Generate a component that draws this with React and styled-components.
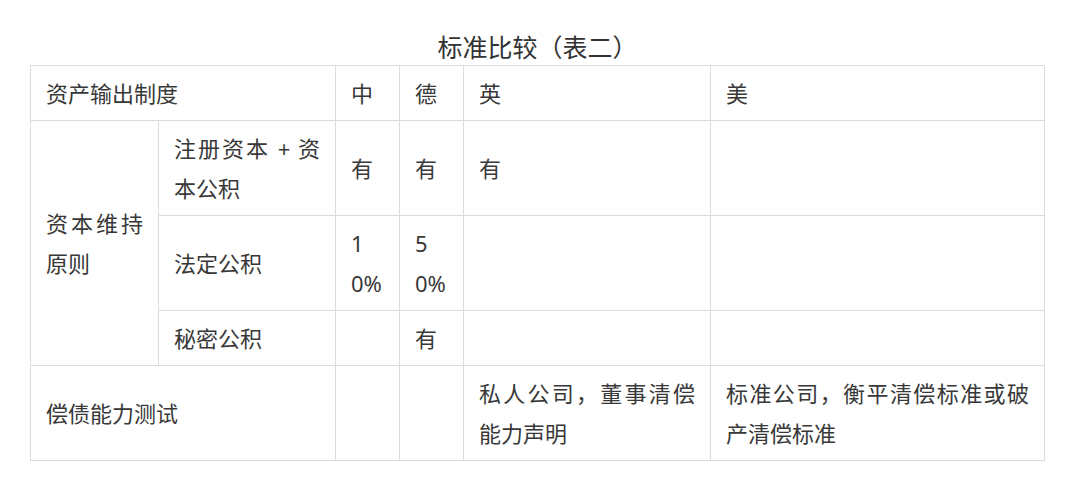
import styled, { createGlobalStyle } from "styled-components";

const GlobalStyle = createGlobalStyle`
  html, body {
    margin: 0;
    padding: 0;
    background: #fff;
  }
  body {
    font-family: "Noto Sans", "Noto Sans CJK SC", sans-serif;
    color: #333;
  }
`;

const Page = styled.div`
  padding: 29px 0 0 30px;
  width: 1015px;
`;

const Title = styled.h3`
  margin: 0;
  font-size: 25px;
  line-height: 36px;
  font-weight: 400;
  text-align: center;
  color: #333;
`;

const Table = styled.table`
  width: 1015px;
  border-collapse: collapse;
  table-layout: fixed;
`;

const Cell = styled.td`
  border: 1px solid #dcdcdc;
  padding: 7px 15px;
  font-size: 22px;
  line-height: 40px;
  text-align: justify;
  text-justify: inter-character;
  vertical-align: middle;
  word-break: break-all;
  color: #383838;
`;

const widths = [128, 177, 64, 64, 247, 334];

const App = () => {
  return (
    <>
      <GlobalStyle />
      <Page>
        <Title>标准比较（表二）</Title>
        <Table>
          <colgroup>
            {widths.map((w, i) => (
              <col key={i} style={{ width: w }} />
            ))}
          </colgroup>
          <tbody>
            <tr>
              <Cell colSpan={2}>资产输出制度</Cell>
              <Cell>中</Cell>
              <Cell>德</Cell>
              <Cell>英</Cell>
              <Cell>美</Cell>
            </tr>
            <tr>
              <Cell rowSpan={3}>资本维持原则</Cell>
              <Cell>注册资本 + 资本公积</Cell>
              <Cell>有</Cell>
              <Cell>有</Cell>
              <Cell>有</Cell>
              <Cell></Cell>
            </tr>
            <tr>
              <Cell>法定公积</Cell>
              <Cell>10%</Cell>
              <Cell>50%</Cell>
              <Cell></Cell>
              <Cell></Cell>
            </tr>
            <tr>
              <Cell>秘密公积</Cell>
              <Cell></Cell>
              <Cell>有</Cell>
              <Cell></Cell>
              <Cell></Cell>
            </tr>
            <tr>
              <Cell colSpan={2}>偿债能力测试</Cell>
              <Cell></Cell>
              <Cell></Cell>
              <Cell>私人公司，董事清偿能力声明</Cell>
              <Cell>标准公司，衡平清偿标准或破产清偿标准</Cell>
            </tr>
          </tbody>
        </Table>
      </Page>
    </>
  );
};

export default App;
